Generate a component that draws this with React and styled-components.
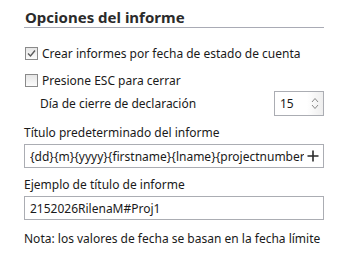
import React from 'react'
import styled, { createGlobalStyle } from 'styled-components'

const GlobalStyle = createGlobalStyle`
  html, body {
    margin: 0;
    background: #ffffff;
  }
  body {
    font-family: "Noto Sans", "Open Sans", sans-serif;
    color: #1a1a1a;
  }
`

const Panel = styled.div`
  width: 300px;
  padding: 8px 0 0 24px;
  display: flex;
  flex-direction: column;
`

const Heading = styled.h2`
  margin: 0;
  font-size: 15px;
  font-weight: 700;
  line-height: 19px;
  color: #2b2b2b;
  padding-left: 1px;
  border-bottom: 1px solid #a9abb5;
`

const CheckRow = styled.label`
  display: flex;
  align-items: center;
  gap: 4px;
  height: 16px;
  margin-top: ${({top}) => top}px;
  padding-left: 1px;
  font-size: 12px;
`

const Box = styled.span`
  width: 11px;
  height: 11px;
  border: 1px solid #8a8a8a;
  background: linear-gradient(#e6e6e6, #fbfbfb);
  display: flex;
  align-items: center;
  justify-content: center;
`

const SpinRow = styled.div`
  display: flex;
  align-items: center;
  justify-content: space-between;
  margin-top: 3px;
  padding-left: 16px;
  font-size: 12px;
`

const Spinner = styled.div`
  box-sizing: border-box;
  width: 50px;
  height: 25px;
  border: 1px solid #abadb3;
  display: flex;
  align-items: center;
  justify-content: space-between;
  padding-left: 5px;
  font-size: 12px;
`

const SpinButtons = styled.div`
  width: 16px;
  height: 100%;
  display: flex;
  flex-direction: column;
  align-items: center;
  justify-content: center;
  gap: 1px;
  background: linear-gradient(90deg, #ffffff, #eeeeee);
`

const Label = styled.div`
  font-size: 12px;
  line-height: 16px;
  margin-top: ${({top}) => top}px;
`

const Field = styled.div`
  box-sizing: border-box;
  height: 24px;
  border: 1px solid #abadb3;
  margin-top: 3px;
  padding: 0 4px 0 5px;
  display: flex;
  align-items: center;
  justify-content: space-between;
  gap: 3px;
  font-size: 12px;
  white-space: nowrap;
  overflow: hidden;
`

const FieldText = styled.span`
  overflow: hidden;
  flex: 1;
`

const Note = styled.div`
  font-size: 12px;
  line-height: 16px;
  margin-top: 11px;
`

const Check = () => (
  <svg width="9" height="9" viewBox="0 0 9 9">
    <path d="M1 4.5 L3.5 7 L8 1.5" fill="none" stroke="#5a5a5a" strokeWidth="1.4" />
  </svg>
)

const Chevron = ({up}) => (
  <svg width="8" height="6" viewBox="0 0 8 6">
    <path d={up ? 'M1 5 L4 1.5 L7 5' : 'M1 1 L4 4.5 L7 1'} fill="none" stroke="#8a8a8a" strokeWidth="1" />
  </svg>
)

const Plus = () => (
  <svg width="12" height="12" viewBox="0 0 12 12">
    <path d="M6 0.5 V11.5 M0.5 6 H11.5" stroke="#2a2a2a" strokeWidth="1.6" />
  </svg>
)

const App = () => (
  <>
    <GlobalStyle />
    <Panel>
      <Heading>Opciones del informe</Heading>
      <CheckRow top={17}>
        <Box><Check /></Box>
        Crear informes por fecha de estado de cuenta
      </CheckRow>
      <CheckRow top={11}>
        <Box />
        Presione ESC para cerrar
      </CheckRow>
      <SpinRow>
        <span>Día de cierre de declaración</span>
        <Spinner>
          <span>15</span>
          <SpinButtons>
            <Chevron up />
            <Chevron />
          </SpinButtons>
        </Spinner>
      </SpinRow>
      <Label top={9}>Título predeterminado del informe</Label>
      <Field>
        <FieldText>{'{dd}{m}{yyyy}{firstname}{lname}{projectnumber}'}</FieldText>
        <Plus />
      </Field>
      <Label top={9}>Ejemplo de título de informe</Label>
      <Field>
        <FieldText>2152026RilenaM#Proj1</FieldText>
      </Field>
      <Note>Nota: los valores de fecha se basan en la fecha límite</Note>
    </Panel>
  </>
)

export default App
